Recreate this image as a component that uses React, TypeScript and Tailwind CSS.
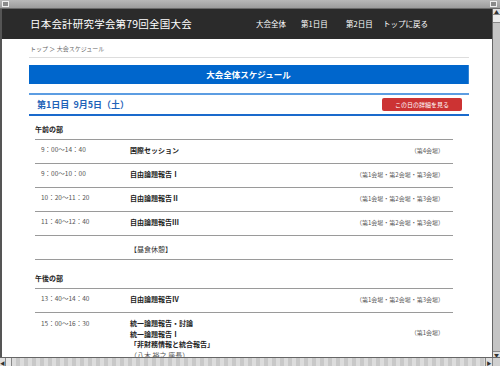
import React from "react";

const font = { fontFamily: '"Noto Sans CJK JP", "Noto Sans", sans-serif' };

type Row = { time: string; lines: string[]; venue?: string; lunch?: boolean };

const morning: Row[] = [
  { time: "9：00～14：40", lines: ["国際セッション"], venue: "（第4会場）" },
  { time: "9：00～10：00", lines: ["自由論題報告Ⅰ"], venue: "（第1会場・第2会場・第3会場）" },
  { time: "10：20～11：20", lines: ["自由論題報告Ⅱ"], venue: "（第1会場・第2会場・第3会場）" },
  { time: "11：40～12：40", lines: ["自由論題報告Ⅲ"], venue: "（第1会場・第2会場・第3会場）" },
  { time: "", lines: ["【昼食休憩】"], lunch: true },
];

function SingleRow({ r }: { r: Row }) {
  return (
    <div className="border-t border-[#9a9a9a] h-[24px] flex items-center pb-[3px] text-[6.5px]">
      <div className="pl-[6px] w-[95px] text-[#555]">{r.time}</div>
      <div className={`flex-1 text-[7px] ${r.lunch ? "text-[#333] pt-[6px]" : "text-[#222] font-semibold"}`}>{r.lines[0]}</div>
      {r.venue && <div className="pr-[9px] text-[6px] text-[#555]">{r.venue}</div>}
    </div>
  );
}

export default function App() {
  return (
    <div style={font} className="w-[500px] h-[366px] overflow-hidden flex flex-col bg-[#a0a0a0]">
      {/* window title bar */}
      <div className="h-[9px] shrink-0 bg-[linear-gradient(#b8b8b8,#9c9c9c)] border-b border-[#6a6a6a] flex items-center justify-between px-[2px]">
        <div className="w-[7px] h-[6px] border border-[#eee] bg-[#8a8a8a]" />
        <div className="w-[7px] h-[6px] border border-[#eee] bg-[#8a8a8a] mr-[1px]" />
      </div>
      <div className="flex-1 flex min-h-0">
        <div className="w-[2px] bg-[#555]" />
        <div className="flex-1 bg-white overflow-hidden">
          {/* header */}
          <div className="h-[30px] bg-[#2b2b2b] flex items-center text-white">
            <div className="pl-[28px] w-[254px] text-[10.5px] tracking-[0.2px]">日本会計研究学会第79回全国大会</div>
            <div className="flex text-[7.5px]">
              <span className="w-[45px]">大会全体</span>
              <span className="w-[45px]">第1日目</span>
              <span className="w-[37px]">第2日目</span>
              <span>トップに戻る</span>
            </div>
          </div>
          <div className="ml-[27px] w-[440px]">
            <div className="pt-[6px] pb-[4px] pl-[1px] h-[19px] border-b border-[#ddd] text-[6px] text-[#666] leading-[8px]">
              トップ ＞ 大会スケジュール
            </div>
            <div className="mt-[7px] h-[19px] bg-[#0066cc] border-r border-[#3385d6] flex items-center justify-center text-white font-bold text-[8.5px]">
              大会全体スケジュール
            </div>
            <div className="mt-[9px] h-[23px] border-t-2 border-t-[#5c9de2] border-b-2 border-b-[#1a6acc] flex items-center justify-between pl-[8px] pr-[7px]">
              <span className="text-[#1f63b8] font-bold text-[9px]">第1日目&nbsp;&nbsp;9月5日（土）</span>
              <span className="w-[80px] h-[13px] rounded-[2px] bg-[#cc3333] flex items-center justify-center text-white text-[6px]">
                この日の詳細を見る
              </span>
            </div>
            <div className="ml-[6px] w-[418px]">
              <div className="h-[23px] pt-[3px] flex items-center font-bold text-[7px] text-[#222]">午前の部</div>
              {morning.map((r, i) => (
                <SingleRow key={i} r={r} />
              ))}
              <div className="border-t border-[#9a9a9a]" />
              <div className="mt-[5px] h-[23px] pt-[3px] flex items-center font-bold text-[7px] text-[#222]">午後の部</div>
              <SingleRow r={{ time: "13：40～14：40", lines: ["自由論題報告Ⅳ"], venue: "（第1会場・第2会場・第3会場）" }} />
              <div className="border-t border-[#9a9a9a] flex pt-[5px] text-[6.5px]">
                <div className="pl-[6px] w-[95px] text-[#555] leading-[10.5px]">15：00～16：30</div>
                <div className="flex-1 text-[7px] leading-[10.5px] text-[#222] font-semibold">
                  <div>統一論題報告・討論</div>
                  <div>統一論題報告Ⅰ</div>
                  <div>「非財務情報と統合報告」</div>
                  <div className="font-normal text-[#555]">（八木 裕之 座長）</div>
                </div>
                <div className="pr-[9px] pt-[10px] text-[6px] text-[#555] leading-[10.5px]">（第1会場）</div>
              </div>
            </div>
          </div>
        </div>
        {/* vertical scrollbar */}
        <div className="w-[8px] bg-[#c4c4c4] border-l border-[#666] flex flex-col">
          <div className="h-[6px] bg-[#e0e0e0] border-b border-[#888] flex items-center justify-center text-[5px] leading-none text-[#333]">▲</div>
          <div className="h-[8px] bg-[#ececec] border-b border-[#888]" />
          <div className="flex-1" />
          <div className="h-[6px] bg-[#e0e0e0] border-t border-[#888] flex items-center justify-center text-[5px] leading-none text-[#333]">▼</div>
        </div>
      </div>
      {/* bottom scrollbar */}
      <div className="h-[9px] shrink-0 border-t border-[#666] flex bg-[repeating-linear-gradient(90deg,#c8c8c8_0px,#c8c8c8_4px,#dcdcdc_4px,#dcdcdc_8px)]">
        <div className="w-[6px] bg-[#e0e0e0] border-r border-[#888] flex items-center justify-center text-[5px] leading-none text-[#333]">◀</div>
        <div className="w-[6px] bg-[#e8e8e8] border-r border-[#888]" />
        <div className="flex-1" />
        <div className="w-[7px] bg-[#e0e0e0] border-l border-[#888] flex items-center justify-center text-[5px] leading-none text-[#333]">▶</div>
        <div className="w-[8px] bg-[#d0d0d0] border-l border-[#888]" />
      </div>
    </div>
  );
}
